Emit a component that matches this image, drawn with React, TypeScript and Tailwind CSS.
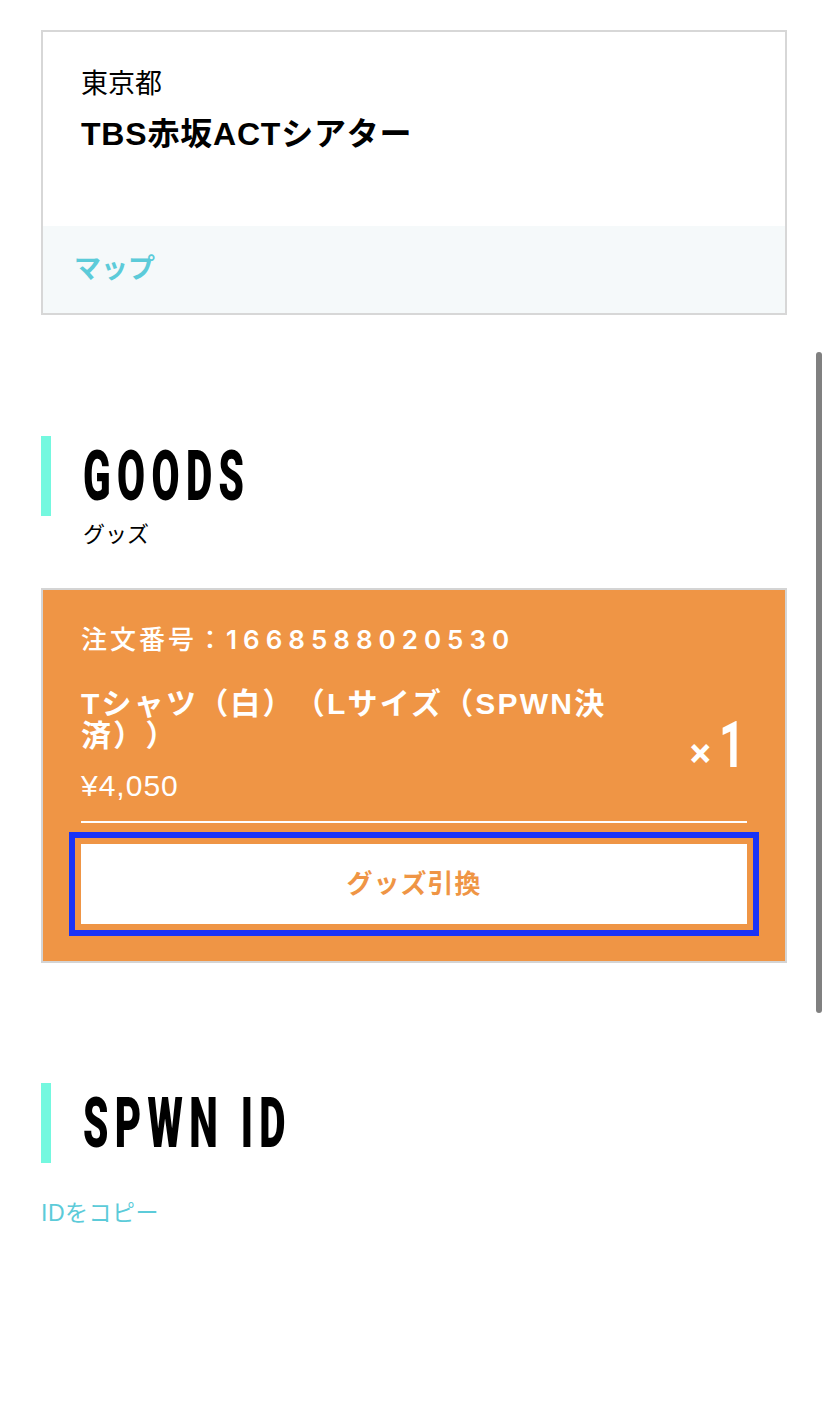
import React from 'react';

const base = { fontFamily: '"Liberation Sans", "Noto Sans CJK JP", sans-serif' };
const din = { fontFamily: 'Roboto, "Liberation Sans", sans-serif' };
const num = { fontFamily: 'Inter, "Liberation Sans", sans-serif' };

const SectionTitle: React.FC<{ title: string; sub?: string }> = ({ title, sub }) => (
  <div>
    <div className="flex items-center h-[80px]">
      <div className="w-[10px] h-full bg-[#74f8df]" />
      <div className="ml-[32px]">
        <span
          className="inline-block origin-left scale-x-[0.58] text-[70px] font-black leading-none tracking-[11px] text-black whitespace-nowrap"
          style={din}
        >
          {title}
        </span>
      </div>
    </div>
    {sub && <p className="ml-[42px] mt-[7px] text-[22px] leading-[24px] text-black">{sub}</p>}
  </div>
);

const App: React.FC = () => {
  return (
    <div className="relative min-h-[1420px] bg-white px-[41px] pt-[30px] [text-spacing-trim:space-all]" style={base}>
      {/* venue */}
      <div className="border-2 border-[#d7d7d7]">
        <div className="h-[194px] px-[38px] pt-[35px]">
          <p className="text-[27px] leading-[34px] text-black">東京都</p>
          <p className="mt-[15px] text-[32px] leading-[36px] font-bold tracking-[0.8px] text-black">TBS赤坂ACTシアター</p>
        </div>
        <div className="h-[87px] bg-[#f5f9fa] flex items-center px-[31px]">
          <span className="text-[27px] font-bold text-[#5ccbd9]">マップ</span>
        </div>
      </div>

      {/* goods */}
      <div className="mt-[121px]">
        <SectionTitle title="GOODS" sub="グッズ" />
      </div>

      <div className="mt-[41px] border-2 border-[#d4d4d4] bg-[#ef9545] px-[38px] pt-[32px] pb-[37px] text-white">
        <p className="text-[26px] leading-[36px] font-medium">
          <span className="tracking-[3px]">注文番号：</span>
          <span className="tracking-[6px] font-semibold" style={num}>1668588020530</span>
        </p>
        <div className="mt-[30px] flex items-center">
          <div className="w-[545px]">
            <p className="text-[30px] leading-[32px] font-bold tracking-[2.2px]">Tシャツ（白）（Lサイズ（SPWN決済））</p>
            <p className="mt-[16px] text-[30px] leading-[36px] tracking-[1px]">¥4,050</p>
          </div>
          <div className="ml-auto mr-[12px] flex items-baseline" style={din}>
            <span className="text-[40px] font-bold leading-none">×</span>
            <span className="ml-[8px] w-[16px] inline-block origin-left scale-x-[0.7] text-[64px] font-bold leading-none">1</span>
          </div>
        </div>
        <div className="mt-[17px] h-[2px] bg-white" />
        <button className="mt-[21px] flex h-[80px] w-full items-center justify-center bg-white outline-[6px] outline-solid outline-[#1a33f6] outline-offset-[6px]">
          <span className="text-[26px] font-bold text-[#ef9545] tracking-[1px]">グッズ引換</span>
        </button>
      </div>

      {/* spwn id */}
      <div className="mt-[120px]">
        <SectionTitle title="SPWN ID" />
      </div>
      <p className="mt-[36px] text-[23px] leading-[28px] tracking-[0.5px] text-[#5ccbd9]">IDをコピー</p>

      {/* overlay scrollbar */}
      <div className="absolute right-[6px] top-[352px] h-[661px] w-[6px] rounded-full bg-[#808080]" />
    </div>
  );
};

export default App;
